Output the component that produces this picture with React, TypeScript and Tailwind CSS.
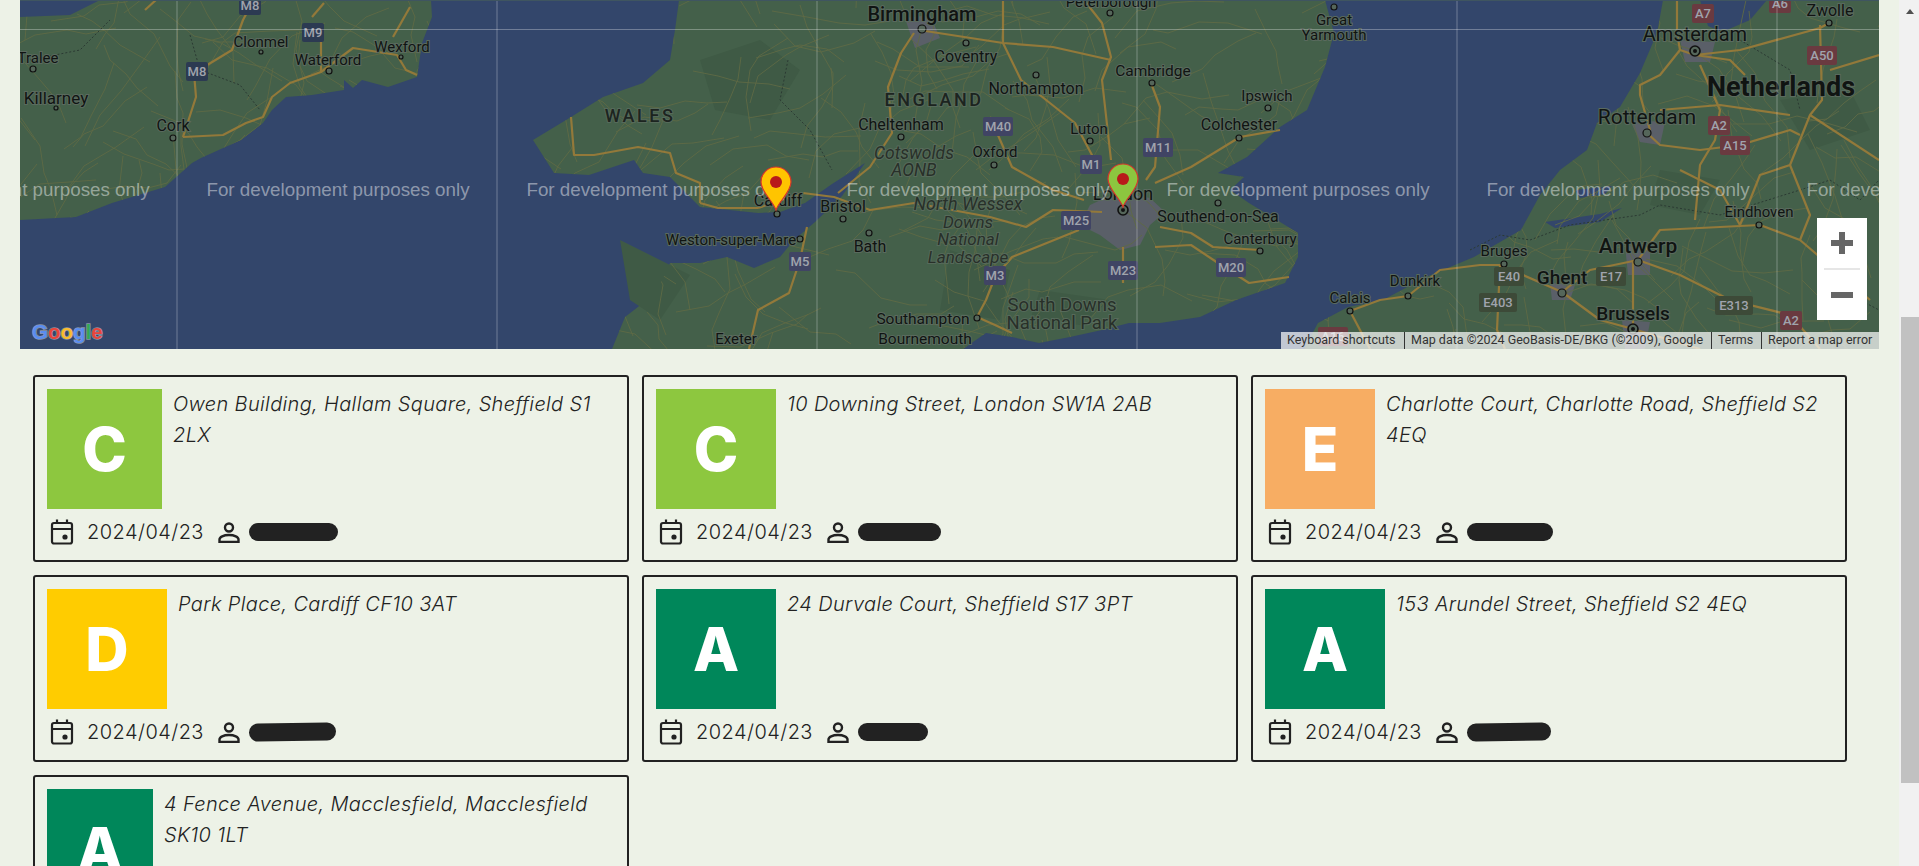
import React from "react";

const LAND = "#44604a";
const WATER = "#33466b";

const land = [
  "20,220 76,217 112,203 165,187 192,163 201,158 241,140 263,123 272,110 286,97 312,95 344,90 344,80 353,88 362,80 388,87 417,77 422,43 432,17 431,0 100,0 70,15 20,17",
  "679,0 675,30 670,60 643,83 603,97 571,117 533,140 554,173 589,175 634,160 643,173 670,177 700,207 720,209 758,213 780,212 805,203 832,184 865,163 842,196 815,222 794,240 780,257 754,268 727,257 700,263 670,263 656,293 625,317 612,349 963,349 986,333 1012,337 1039,343 1070,337 1102,330 1129,323 1160,323 1200,317 1236,300 1285,283 1298,257 1298,233 1249,203 1230,190 1244,177 1218,173 1247,157 1280,127 1307,110 1325,67 1334,33 1325,0",
  "1663,0 1657,33 1640,73 1620,107 1597,123 1587,150 1560,170 1540,195 1521,230 1474,257 1426,277 1383,300 1348,307 1318,323 1305,347 1305,349 1879,349 1879,0",
];
const water = [
  "1700,0 1767,0 1750,20 1722,32 1708,26",
  "1545,222 1600,214 1622,208 1600,222 1555,228",
  "1575,190 1612,186 1605,194 1580,198",
];
const patches = [
  "700,60 760,40 800,70 770,120 715,110",
  "950,250 1010,270 1000,320 940,310",
  "1040,290 1110,300 1080,325 1030,320",
  "1780,100 1850,90 1870,130 1810,150",
  "1660,170 1720,180 1700,215 1650,205",
  "620,240 690,275 660,320 630,300",
];
const grey = [
  "1090,205 1118,192 1150,198 1165,212 1150,225 1140,245 1120,250 1100,235 1080,225",
  "905,18 930,15 940,38 915,48",
  "1625,245 1650,250 1650,275 1628,275",
  "1680,40 1715,42 1710,62 1685,62",
  "1630,120 1665,122 1660,145 1640,142",
  "1550,283 1575,285 1570,300 1552,300",
  "1622,320 1650,322 1645,349 1625,349",
];
const roads = [
  "838,193 870,167 892,133 888,87 901,53 914,33",
  "700,203 718,208 758,208",
  "758,208 803,193 834,197 870,210 914,203 990,217 1026,227 1053,210 1102,212",
  "571,117 574,155 594,155 638,147 670,153 676,173 700,183 700,203",
  "807,227 800,260 789,293 758,310 749,349",
  "1079,230 1012,257 995,277 986,300 977,317 995,325 1012,333",
  "1111,160 1102,80 1111,57 1102,23 1084,0",
  "990,117 1012,167 1053,190 1084,200",
  "919,30 1003,43 1053,47 1111,60",
  "1003,0 1003,43 1021,80 1075,123 1093,157",
  "1151,83 1160,107 1155,167 1146,180",
  "1155,247 1191,245 1218,263 1249,283 1289,277",
  "1160,227 1191,233 1213,247 1260,250",
  "1155,183 1191,167 1240,137 1280,130",
  "1123,247 1123,283",
  "183,137 196,97 194,73 232,50 243,20 250,7",
  "183,137 223,135 246,123 263,117 272,97 290,83 321,72 353,48 397,55 406,70 417,75",
  "393,37 410,7",
  "312,17 324,3",
  "321,40 321,72",
  "156,0 145,10",
  "1677,0 1677,33 1680,50 1695,55 1730,60 1745,75",
  "1695,55 1740,50 1820,28 1829,23",
  "1700,65 1720,110 1715,140 1700,165 1695,220",
  "1820,25 1822,100 1810,115 1790,165 1760,175 1740,225",
  "1647,133 1660,145 1700,150 1740,145 1790,130 1800,135",
  "1790,115 1720,105 1660,110",
  "1830,70 1879,55",
  "1810,115 1879,160",
  "1680,50 1660,75 1640,85 1640,95 1650,130",
  "1350,311 1380,300 1408,296 1440,270 1480,265 1500,265 1562,292",
  "1562,292 1590,270 1638,260 1680,275 1730,300 1790,315 1820,349",
  "1638,260 1660,230 1760,225 1800,240 1870,300",
  "1562,292 1600,320 1633,329 1633,260",
  "1500,265 1497,330 1505,349",
  "1633,329 1700,349",
  "1680,170 1720,190 1740,225",
  "1350,311 1370,349",
  "1790,165 1810,215 1800,240",
];
const borders = [
  "30,60 80,50 110,20",
  "190,35 200,70 240,85 260,110",
  "788,60 780,100 810,130 832,170",
  "1470,250 1500,235 1530,240 1570,225 1640,215 1660,205 1720,215 1800,190 1830,180 1860,200 1879,180",
  "1740,40 1790,70 1800,110",
  "1840,250 1860,300 1879,310",
];

function makeMinor(): string[] {
  let seed = 4242;
  const rnd = () => {
    seed = (seed * 1664525 + 1013904223) % 4294967296;
    return seed / 4294967296;
  };
  const out: string[] = [];
  for (let i = 0; i < 420; i++) {
    let x = 20 + rnd() * 1859;
    let y = rnd() * 349;
    let a = rnd() * Math.PI * 2;
    const pts = [`${x.toFixed(0)},${y.toFixed(0)}`];
    for (let k = 0; k < 4; k++) {
      a += (rnd() - 0.5) * 1.3;
      const d = 14 + rnd() * 22;
      x += Math.cos(a) * d;
      y += Math.sin(a) * d;
      pts.push(`${x.toFixed(0)},${y.toFixed(0)}`);
    }
    out.push(pts.join(" "));
  }
  return out;
}
const minor = makeMinor();

type L = [string, number, number, number?, number?];
const labels: L[] = [
  ["Tralee", 38, 63, 15],
  ["Killarney", 56, 104, 17],
  ["Clonmel", 261, 47, 15],
  ["Waterford", 328, 65, 15],
  ["Wexford", 402, 52, 15],
  ["Cork", 173, 131, 16],
  ["Birmingham", 922, 21, 20, 500],
  ["Coventry", 966, 62, 16],
  ["Peterborough", 1111, 7, 15],
  ["Cambridge", 1153, 76, 15.5],
  ["Northampton", 1036, 94, 16],
  ["Cheltenham", 901, 130, 16],
  ["Ipswich", 1267, 101, 15],
  ["Colchester", 1239, 130, 16],
  ["Luton", 1089, 134, 15],
  ["Oxford", 995, 157, 15],
  ["Great", 1334, 25, 15],
  ["Yarmouth", 1334, 40, 15],
  ["Bristol", 843, 212, 16],
  ["Cardiff", 778, 206, 16],
  ["London", 1123, 200, 18],
  ["Southend-on-Sea", 1218, 222, 16],
  ["Bath", 870, 252, 16],
  ["Weston-super-Mare", 731, 245, 15],
  ["Canterbury", 1260, 244, 15],
  ["Southampton", 923, 324, 15.5],
  ["Bournemouth", 925, 344, 15.5],
  ["Exeter", 736, 344, 15],
  ["Calais", 1350, 303, 15],
  ["Dunkirk", 1415, 286, 15],
  ["Bruges", 1504, 256, 15],
  ["Ghent", 1562, 284, 19, 500],
  ["Antwerp", 1638, 253, 21, 500],
  ["Brussels", 1633, 320, 19, 500],
  ["Eindhoven", 1759, 217, 15],
  ["Amsterdam", 1695, 41, 20],
  ["Zwolle", 1830, 16, 16],
  ["Netherlands", 1781, 96, 27, 700],
  ["Rotterdam", 1647, 124, 21],
];
const parks: L[] = [
  ["Cotswolds", 914, 159, 17.5],
  ["AONB", 914, 176, 17.5],
  ["North Wessex", 968, 210, 18],
  ["Downs", 968, 228, 17],
  ["National", 968, 245, 17],
  ["Landscape", 968, 263, 17],
];
const dots: [number, number, number?][] = [
  [33, 69], [56, 108, 2], [261, 52, 2], [329, 71], [401, 57, 2], [173, 138],
  [922, 29, 4], [966, 43], [1110, 13], [1152, 83], [1036, 75], [901, 137], [1268, 108], [1239, 138],
  [1090, 141], [994, 165], [1334, 7], [843, 219], [777, 214], [1218, 203], [869, 233], [800, 239], [1260, 251],
  [977, 318], [1350, 311], [1408, 296], [1504, 264], [1562, 293, 4], [1638, 262, 4], [1759, 225], [1829, 23], [1647, 133, 4],
];
const rings: [number, number][] = [[1695, 51], [1633, 329], [1123, 210]];
const shields: [string, number, number, number?][] = [
  ["M8", 197, 72, 0], ["M8", 250, 6, 0], ["M9", 313, 33, 0],
  ["M40", 998, 127], ["M1", 1091, 165], ["M11", 1158, 148], ["M25", 1076, 221], ["M5", 800, 262],
  ["M3", 995, 276], ["M23", 1123, 271], ["M20", 1231, 268],
  ["E40", 1509, 277, 2], ["E17", 1611, 277, 2], ["E403", 1498, 303, 2], ["E313", 1734, 306, 2],
  ["A2", 1791, 321, 1], ["A16", 1333, 337, 1], ["A7", 1703, 14, 1], ["A6", 1780, 4, 1], ["A50", 1822, 56, 1], ["A2", 1719, 126, 1], ["A15", 1735, 146, 1],
];
const shieldFill = ["#404464", "#2c3a52", "#6a3a40", "#3d4a38"];
function shieldColor(s: number | undefined) {
  if (s === 0) return shieldFill[1];
  if (s === 1) return shieldFill[2];
  if (s === 2) return shieldFill[3];
  return shieldFill[0];
}

const gridX = [177, 497, 817, 1137, 1457, 1777];
const marks = [18, 338, 658, 978, 1298, 1618, 1938];

function Pin({ x, y, fill }: { x: number; y: number; fill: string }) {
  return (
    <g transform={`translate(${x} ${y})`}>
      <path
        d="M0 28 C-3 19 -15 10 -15 0 A15 15 0 0 1 15 0 C15 10 3 19 0 28 Z"
        fill={fill}
        stroke="#d6352b"
        strokeWidth="1.2"
      />
      <circle cx="0" cy="0" r="6" fill="#b81a1a" />
    </g>
  );
}

function MapCanvas() {
  return (
    <svg width="1859" height="349" viewBox="20 0 1859 349" className="block">
      <defs>
        <clipPath id="landClip">
          {land.map((p) => (
            <polygon key={p} points={p} />
          ))}
        </clipPath>
      </defs>
      <rect x="20" y="0" width="1859" height="349" fill={WATER} />
      {land.map((p) => (
        <polygon key={p} points={p} fill={LAND} />
      ))}
      {patches.map((p) => (
        <polygon key={p} points={p} fill="#3f5a45" />
      ))}
      {water.map((p) => (
        <polygon key={p} points={p} fill={WATER} />
      ))}
      {grey.map((p) => (
        <polygon key={p} points={p} fill="#5a5f68" />
      ))}
      <g clipPath="url(#landClip)">
        {minor.map((p) => (
          <polyline key={p} points={p} fill="none" stroke="#5f6a45" strokeWidth="0.9" />
        ))}
      </g>
      {borders.map((p) => (
        <polyline key={p} points={p} fill="none" stroke="#2b3a33" strokeWidth="1" strokeDasharray="2 2" />
      ))}
      {roads.map((p) => (
        <polyline key={p} points={p} fill="none" stroke="#93793a" strokeWidth="2.2" strokeLinejoin="round" />
      ))}
      {dots.map(([x, y, r]) => (
        <circle key={`${x}-${y}`} cx={x} cy={y} r={r ?? 3} fill="#55665a" stroke="#111" strokeWidth="1.2" />
      ))}
      {rings.map(([x, y]) => (
        <g key={`${x}`}>
          <circle cx={x} cy={y} r="5" fill="#55665a" stroke="#111" strokeWidth="1.6" />
          <circle cx={x} cy={y} r="2" fill="#111" />
        </g>
      ))}
      {shields.map(([t, x, y, s]) => {
        const w = t.length * 8 + 6;
        return (
          <g key={`${t}-${x}`}>
            <rect x={x - w / 2} y={y - 10} width={w} height="19" rx="2" fill={shieldColor(s)} />
            <text x={x} y={y + 4} textAnchor="middle" fontSize="13" fontWeight="500" fill="#a0a4ad" className="font-['Roboto',sans-serif]">
              {t}
            </text>
          </g>
        );
      })}
      {labels.map(([t, x, y, size, weight]) => (
        <text
          key={t}
          x={x}
          y={y}
          textAnchor="middle"
          fontSize={size}
          fontWeight={weight ?? 400}
          fill="#101412"
          stroke="#5a6a5e"
          strokeWidth="2"
          paintOrder="stroke"
          className="font-['Roboto',sans-serif]"
        >
          {t}
        </text>
      ))}
      {parks.map(([t, x, y, size]) => (
        <text
          key={t + y}
          x={x}
          y={y}
          textAnchor="middle"
          fontSize={size}
          fontStyle="italic"
          fill="#283029"
          stroke="#566a5a"
          strokeWidth="2"
          paintOrder="stroke"
          className="font-['Roboto',sans-serif]"
        >
          {t}
        </text>
      ))}
      <text x="640" y="122" textAnchor="middle" fontSize="18" fontWeight="500" letterSpacing="2.5" fill="#1c2420" stroke="#566a5a" strokeWidth="2" paintOrder="stroke" className="font-['Roboto',sans-serif]">
        WALES
      </text>
      <text x="934" y="106" textAnchor="middle" fontSize="18" fontWeight="500" letterSpacing="2.5" fill="#1c2420" stroke="#566a5a" strokeWidth="2" paintOrder="stroke" className="font-['Roboto',sans-serif]">
        ENGLAND
      </text>
      <text x="1062" y="311" textAnchor="middle" fontSize="18.5" fill="#283029" stroke="#566a5a" strokeWidth="2" paintOrder="stroke" className="font-['Roboto',sans-serif]">
        South Downs
      </text>
      <text x="1062" y="329" textAnchor="middle" fontSize="18.5" fill="#283029" stroke="#566a5a" strokeWidth="2" paintOrder="stroke" className="font-['Roboto',sans-serif]">
        National Park
      </text>
      {gridX.map((x) => (
        <line key={x} x1={x} x2={x} y1="0" y2="349" stroke="#ffffff" strokeOpacity="0.3" />
      ))}
      <line x1="20" x2="1879" y1="29.5" y2="29.5" stroke="#ffffff" strokeOpacity="0.3" />
      <line x1="20" x2="1879" y1="0.5" y2="0.5" stroke="#3f5560" />
      {marks.map((x) => (
        <text key={x} x={x} y="196" textAnchor="middle" fontSize="18.8" fill="#ffffff" fillOpacity="0.45" className="font-['Liberation_Sans',sans-serif]">
          For development purposes only
        </text>
      ))}
      <Pin x={776} y={182} fill="#ffc400" />
      <Pin x={1123} y={179} fill="#8cc63f" />
      <text x="32" y="339" fontSize="20.5" fontWeight="700" stroke="#8a94a6" strokeWidth="1.5" paintOrder="stroke" className="font-['Liberation_Sans',sans-serif]">
        <tspan fill="#5a8df0">G</tspan>
        <tspan fill="#e8453c">o</tspan>
        <tspan fill="#f9bb2d">o</tspan>
        <tspan fill="#5a8df0">g</tspan>
        <tspan fill="#34a853">l</tspan>
        <tspan fill="#e8453c">e</tspan>
      </text>
    </svg>
  );
}

function CalendarIcon() {
  return (
    <svg width="24" height="26" viewBox="0 0 24 26" fill="none" stroke="#222" strokeWidth="2.2" className="shrink-0">
      <rect x="2" y="4" width="20" height="20.5" rx="2" />
      <path d="M2 10h20M7 0.5v4M17 0.5v4" />
      <circle cx="15" cy="18" r="2.6" fill="#222" stroke="none" />
    </svg>
  );
}

function PersonIcon() {
  return (
    <svg width="22" height="21" viewBox="0 0 22 21" fill="none" stroke="#222" strokeWidth="2.4" className="shrink-0">
      <circle cx="11" cy="5.5" r="4" />
      <path d="M1.5 20v-2.5c0-2.5 4-4.5 9.5-4.5s9.5 2 9.5 4.5V20Z" />
    </svg>
  );
}

type Card = {
  letter: string;
  tile: string;
  lines: string[];
  pill: string;
};

const cards: Card[] = [
  { letter: "C", tile: "w-[115px] bg-[#8dc73f]", lines: ["Owen Building, Hallam Square, Sheffield S1", "2LX"], pill: "w-[89px]" },
  { letter: "C", tile: "w-[120px] bg-[#8dc73f]", lines: ["10 Downing Street, London SW1A 2AB"], pill: "w-[83px]" },
  { letter: "E", tile: "w-[110px] bg-[#f7ad63]", lines: ["Charlotte Court, Charlotte Road, Sheffield S2", "4EQ"], pill: "w-[86px]" },
  { letter: "D", tile: "w-[120px] bg-[#ffcc00]", lines: ["Park Place, Cardiff CF10 3AT"], pill: "w-[87px] -rotate-1" },
  { letter: "A", tile: "w-[120px] bg-[#00875a]", lines: ["24 Durvale Court, Sheffield S17 3PT"], pill: "w-[70px]" },
  { letter: "A", tile: "w-[120px] bg-[#00875a]", lines: ["153 Arundel Street, Sheffield S2 4EQ"], pill: "w-[84px] ml-1 -rotate-1" },
  { letter: "A", tile: "w-[106px] bg-[#00875a]", lines: ["4 Fence Avenue, Macclesfield, Macclesfield", "SK10 1LT"], pill: "w-[80px]" },
];

function PropertyCard({ card }: { card: Card }) {
  return (
    <div className="h-[187px] rounded-[3px] border-2 border-[#222] p-3">
      <div className="flex h-[120px] gap-[11px]">
        <div className={`${card.tile} flex h-[120px] shrink-0 items-center justify-center`}>
          <span className="text-[60px] leading-none font-extrabold text-white">{card.letter}</span>
        </div>
        <div className="text-[20px] leading-[30.5px] font-light tracking-[0.35px] whitespace-nowrap text-[#222] italic">
          {card.lines.map((l) => (
            <div key={l}>{l}</div>
          ))}
        </div>
      </div>
      <div className="mt-[10px] flex items-center pl-[3px] text-[#222]">
        <CalendarIcon />
        <span className="ml-[13px] text-[20px] leading-[26px] font-light tracking-[0.45px]">2024/04/23</span>
        <span className="ml-[14px]">
          <PersonIcon />
        </span>
        <span className={`ml-[9px] h-[18px] rounded-full bg-[#222] ${card.pill}`} />
      </div>
    </div>
  );
}

export default function App() {
  return (
    <div className="flex h-[866px] w-full overflow-hidden bg-[#edf2e7] font-['Inter',sans-serif]">
      <main className="h-full min-w-0 flex-1">
        <div className="relative mx-5 h-[349px] w-[1859px] overflow-hidden">
          <MapCanvas />
          <div className="absolute top-[218px] right-3 flex h-[102px] w-[50px] flex-col items-center bg-white">
            <div className="flex h-[50px] w-full items-center justify-center">
              <svg width="24" height="24" viewBox="0 0 24 24" fill="#666">
                <rect x="1" y="9" width="22" height="6" />
                <rect x="9" y="1" width="6" height="22" />
              </svg>
            </div>
            <div className="h-[2px] w-[36px] bg-[#e6e6e6]" />
            <div className="flex h-[50px] w-full items-center justify-center">
              <svg width="24" height="24" viewBox="0 0 24 24" fill="#666">
                <rect x="1" y="9" width="22" height="6" />
              </svg>
            </div>
          </div>
          <div className="absolute right-0 bottom-0 flex h-[17px] w-[598px] items-center bg-[#ffffffb3] font-['Roboto',sans-serif] text-[12.5px] leading-none text-[#333]">
            <span className="w-[123px] pl-[6px]">Keyboard shortcuts</span>
            <span className="h-full w-px bg-[#333]" />
            <span className="w-[306px] pl-[6px] whitespace-nowrap">Map data ©2024 GeoBasis-DE/BKG (©2009), Google</span>
            <span className="h-full w-px bg-[#333]" />
            <span className="w-[49px] pl-[6px]">Terms</span>
            <span className="h-full w-px bg-[#333]" />
            <span className="pl-[6px] whitespace-nowrap">Report a map error</span>
          </div>
        </div>
        <div className="mt-[26px] ml-[33px] grid grid-cols-[repeat(3,596px)] gap-x-[13px] gap-y-[13px]">
          {cards.map((c) => (
            <PropertyCard key={c.lines[0]} card={c} />
          ))}
        </div>
      </main>
      <aside className="flex h-full w-5 shrink-0 flex-col items-end bg-[#f1f1f1]">
        <div className="flex h-[317px] w-[18px] justify-center pt-[9px]">
          <div className="h-0 w-0 border-x-[4px] border-b-[5px] border-x-transparent border-b-[#505050]" />
        </div>
        <div className="h-[466px] w-[18px] bg-[#c1c1c1]" />
      </aside>
    </div>
  );
}
